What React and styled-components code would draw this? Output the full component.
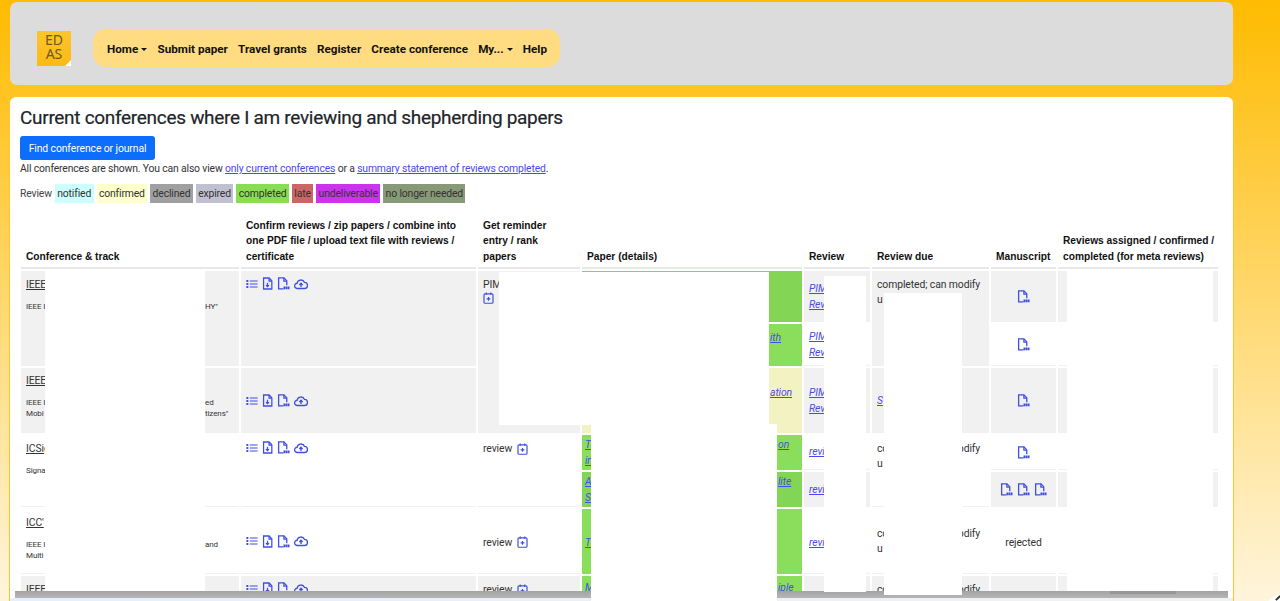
import React from "react";
import styled, { createGlobalStyle } from "styled-components";

const Global = createGlobalStyle`
  html, body {
    margin: 0;
    height: 601px;
    overflow: hidden;
  }
  body {
    background: linear-gradient(180deg, #ffbb00 0%, #fff5dc 100%);
    font-family: Roboto, "Noto Sans", sans-serif;
    color: #212529;
  }
`;

const Page = styled.div`
  position: relative;
  width: 1280px;
  height: 601px;
  overflow: hidden;
  padding: 2px 46px 0 9px;
  box-sizing: border-box;
`;
const Header = styled.header`
  height: 83px;
  margin: 0 1px;
  box-sizing: border-box;
  background: #dcdcdc;
  border-radius: 7px;
  display: flex;
  align-items: center;
  padding: 9px 0 0 27px;
  gap: 22px;
`;
const Logo = styled.div`
  position: relative;
  width: 34px;
  height: 35px;
  background: linear-gradient(180deg, #fcc52e, #fdb913);
  color: #6b5a22;
  font: 14px/14px "Noto Sans", sans-serif;
  text-align: center;
  padding-top: 2px;
  box-sizing: border-box;
`;
const LogoCorner = styled.span`
  position: absolute;
  right: 0;
  bottom: 0;
  width: 0;
  height: 0;
  border-style: solid;
  border-width: 0 0 6px 6px;
  border-color: transparent transparent #fff transparent;
`;
const Nav = styled.nav`
  width: 467px;
  height: 38px;
  box-sizing: border-box;
  background: #ffdc81;
  border-radius: 13px;
  display: flex;
  align-items: center;
  padding: 2px 0 0 14px;
  gap: 10.2px;
`;
const NavItem = styled.a`
  font-size: 11.7px;
  font-weight: 700;
  color: #111;
  white-space: nowrap;
  display: inline-flex;
  align-items: center;
`;
const Caret = styled.span`
  display: inline-block;
  margin-left: 3px;
  border-top: 3px solid #111;
  border-left: 3px solid transparent;
  border-right: 3px solid transparent;
`;
const Card = styled.main`
  margin-top: 11px;
  height: 520px;
  background: #fff;
  border: 1px solid #ffc42e;
  border-bottom: 0;
  border-radius: 7px 7px 0 0;
  padding: 9px 10px 0;
  box-sizing: border-box;
`;
const Title = styled.h1`
  margin: 0;
  font-size: 19px;
  letter-spacing: -0.3px;
  line-height: 24px;
  font-weight: 400;
  -webkit-text-stroke: 0.2px #212529;
  color: #212529;
  white-space: nowrap;
`;
const FindButton = styled.button`
  display: block;
  margin-top: 6px;
  width: 135px;
  height: 24px;
  padding: 0;
  border: 0;
  border-radius: 3px;
  background: #0d6efd;
  color: #fff;
  font: 10.4px Roboto, sans-serif;
  letter-spacing: -0.1px;
`;
const Note = styled.p`
  margin: 1px 0 0;
  font-size: 10.4px;
  letter-spacing: -0.16px;
  line-height: 15px;
  color: #333;
`;
const NoteLink = styled.a`
  color: #4a4ae8;
  text-decoration: underline;
`;
const Legend = styled.div`
  display: flex;
  align-items: center;
  gap: 3px;
  margin-top: 8px;
  height: 19px;
  font-size: 10.4px;
  letter-spacing: -0.15px;
  color: #444;
`;
const LegendTag = styled.span`
  background: ${(p) => p.$bg};
  padding: 0 2.4px;
  height: 19px;
  line-height: 19px;
  color: #333;
`;
const TableWrap = styled.div`
  margin-top: 11px;
  margin-left: -1px;
  height: 378px;
  overflow: hidden;
`;
const Table = styled.table`
  border-collapse: separate;
  border-spacing: 2px;
  table-layout: fixed;
  width: 1201px;
  font-size: 10.4px;
  letter-spacing: -0.1px;
  color: #333;
`;
const Th = styled.th`
  width: ${(p) => p.$w}px;
  height: 53px;
  vertical-align: bottom;
  text-align: left;
  font: 700 10.2px/15.3px "Liberation Sans", sans-serif;
  letter-spacing: 0;
  color: #111;
  padding: 0 0 3px 5px;
  border-bottom: 2px solid #e8e8e8;
  box-sizing: border-box;
`;
const Tr = styled.tr`
  height: ${(p) => p.$h}px;
`;
const Td = styled.td`
  background: ${(p) => p.$bg || "transparent"};
  vertical-align: ${(p) => p.$va || "top"};
  text-align: ${(p) => (p.$center ? "center" : "left")};
  padding: ${(p) => p.$pad || "6px 5px 0"};
  border-bottom: ${(p) => (p.$bg ? "0" : "1px solid #f0f0f0")};
  line-height: 15.3px;
  box-sizing: border-box;
  overflow: hidden;
`;
const ConfName = styled.a`
  display: block;
  text-decoration: underline;
  color: #333;
`;
const ConfTrack = styled.div`
  margin-top: 9px;
  font-size: 8px;
  line-height: 11px;
  color: #333;
`;
const TrackLine = styled.div`
  display: flex;
`;
const TrackStart = styled.span`
  width: 179px;
  flex: none;
`;
const IconRow = styled.div`
  display: flex;
  gap: 4px;
  align-items: center;
  justify-content: ${(p) => (p.$center ? "center" : "flex-start")};
  color: #3f4fe0;
`;
const ReviewCell = styled.span`
  display: inline-flex;
  align-items: center;
  gap: 5px;
`;
const PaperLink = styled.a`
  color: #4a4ae8;
  font-style: italic;
  text-decoration: underline;
  display: block;
`;
const PaperLine = styled.div`
  display: flex;
  height: 15.3px;
`;
const PaperStart = styled.span`
  width: ${(p) => p.$w || 185}px;
  flex: none;
`;
const Redaction = styled.div`
  position: absolute;
  left: ${(p) => p.$x}px;
  top: ${(p) => p.$y}px;
  width: ${(p) => p.$w}px;
  height: ${(p) => p.$h}px;
  background: #fff;
  z-index: ${(p) => p.$z || 1};
`;
const BottomStrip = styled.div`
  position: absolute;
  left: 10px;
  top: 598px;
  width: 1223px;
  height: 3px;
  background: linear-gradient(90deg, #e6effb, #f1f1f1);
`;
const Scrollbar = styled.div`
  position: absolute;
  left: 15px;
  top: 591px;
  width: 1213px;
  height: 7px;
  background: linear-gradient(180deg, #a3a3a3, #b6b6b6);
`;
const ScrollThumb = styled.div`
  position: absolute;
  left: 1095px;
  top: 0;
  width: 66px;
  height: 3px;
  background: #979797;
`;
const FloatButton = styled.div`
  position: absolute;
  left: 1265px;
  top: 594px;
  width: 36px;
  height: 36px;
  border-radius: 50%;
  background: #fff;
`;
const FloatMark = styled.span`
  position: absolute;
  left: 10px;
  top: 3px;
  width: 6px;
  height: 2px;
  background: #333;
  transform: rotate(-45deg);
`;

const ListIcon = () => (
  <svg width="12" height="12" viewBox="0 0 16 16" fill="currentColor">
    <path d="M5 3.2h10.5v1.4H5zM5 7.3h10.5v1.4H5zM5 11.4h10.5v1.4H5z" />
    <path d="M.5 2.6h2.6v2.6H.5zM.5 6.7h2.6v2.6H.5zM.5 10.8h2.6v2.6H.5z" />
  </svg>
);
const FileIcon = () => (
  <svg width="11" height="13" viewBox="0 0 14 16" fill="none" stroke="currentColor" strokeWidth="1.6">
    <path d="M2 1h7l3.5 3.5V15H2z" />
    <path d="M9 1v4h3.5" />
    <path d="M7 7v5M5 10l2 2 2-2" />
  </svg>
);
const PdfIcon = () => (
  <svg width="13" height="13" viewBox="0 0 16 16" fill="none" stroke="currentColor" strokeWidth="1.6">
    <path d="M8 14.5H2V1h6.5L12 4.5V10" />
    <path d="M8.5 1v4H12" />
    <path d="M8 13.5h7.5" strokeWidth="3.4" strokeDasharray="2.2 0.4" />
  </svg>
);
const CloudIcon = () => (
  <svg width="14" height="12" viewBox="0 0 18 16" fill="none" stroke="currentColor" strokeWidth="1.8">
    <path d="M5 14H4.2A3.5 3.5 0 0 1 3.8 7 5.2 5.2 0 0 1 13.7 5.9 4 4 0 0 1 13.6 14H5z" />
    <path d="M9 12V7M6.8 9.2 9 7l2.2 2.2" />
  </svg>
);
const CalendarIcon = () => (
  <svg width="11" height="12" viewBox="0 0 14 16" fill="none" stroke="currentColor" strokeWidth="1.6">
    <rect x="1" y="2.5" width="12" height="12.5" rx="1.5" />
    <path d="M4 .5v3M10 .5v3" />
    <path d="M7 6.7v5M4.5 9.2h5" />
  </svg>
);

const ConfirmIcons = () => (
  <IconRow>
    <ListIcon />
    <FileIcon />
    <PdfIcon />
    <CloudIcon />
  </IconRow>
);
const Pdf = ({ count = 1 }) => (
  <IconRow $center>
    {Array.from({ length: count }).map((_, i) => (
      <PdfIcon key={i} />
    ))}
  </IconRow>
);
const Review = () => (
  <ReviewCell>
    review
    <IconRow>
      <CalendarIcon />
    </IconRow>
  </ReviewCell>
);
const Track = ({ start, end }) => (
  <TrackLine>
    <TrackStart>{start}</TrackStart>
    <span>{end}</span>
  </TrackLine>
);
const Paper = ({ start, end, offset }) => (
  <PaperLine>
    <PaperStart $w={offset}>
      <PaperLink>{start}</PaperLink>
    </PaperStart>
    <PaperLink>{end}</PaperLink>
  </PaperLine>
);
const ReviewLinks = () => (
  <>
    <PaperLink>PIM</PaperLink>
    <PaperLink>Rev</PaperLink>
  </>
);
const Due = () => (
  <>
    completed; can modify
    <br />u
  </>
);

const GREY = "#f1f1f1";
const GREEN = "#8ade5c";
const GREEN_DK = "#83d556";
const YELLOW = "#f3f2c2";
const MID = "0 5px";
const LOW = "3px 5px 0";
const PAPER = "0 3px";

// white patches that hide parts of the table in the picture: x, y, w, h, above scrollbar
const patches = [
  [45, 271, 160, 320, 1],
  [499, 272, 270, 153, 1],
  [591, 424, 186, 177, 3],
  [824, 276, 42, 316, 1],
  [884, 293, 78, 302, 3],
  [1067, 271, 146, 320, 1],
];

export default function App() {
  return (
    <Page>
      <Global />
      <Header>
        <Logo>
          ED
          <br />
          AS
          <LogoCorner />
        </Logo>
        <Nav>
          <NavItem>
            Home
            <Caret />
          </NavItem>
          <NavItem>Submit paper</NavItem>
          <NavItem>Travel grants</NavItem>
          <NavItem>Register</NavItem>
          <NavItem>Create conference</NavItem>
          <NavItem>
            My...
            <Caret />
          </NavItem>
          <NavItem>Help</NavItem>
        </Nav>
      </Header>
      <Card>
        <Title>Current conferences where I am reviewing and shepherding papers</Title>
        <FindButton>Find conference or journal</FindButton>
        <Note>
          All conferences are shown. You can also view <NoteLink>only current conferences</NoteLink> or a{" "}
          <NoteLink>summary statement of reviews completed</NoteLink>.
        </Note>
        <Legend>
          Review
          <LegendTag $bg="#ccffff">notified</LegendTag>
          <LegendTag $bg="#ffffcc">confirmed</LegendTag>
          <LegendTag $bg="#a0a0a0">declined</LegendTag>
          <LegendTag $bg="#c0c0d0">expired</LegendTag>
          <LegendTag $bg="#88dd55">completed</LegendTag>
          <LegendTag $bg="#cc6666">late</LegendTag>
          <LegendTag $bg="#cc33ee">undeliverable</LegendTag>
          <LegendTag $bg="#889977">no longer needed</LegendTag>
        </Legend>
        <TableWrap>
          <Table>
            <thead>
              <tr>
                <Th $w={218}>Conference &amp; track</Th>
                <Th $w={235}>
                  Confirm reviews / zip papers / combine into
                  <br />
                  one PDF file / upload text file with reviews /
                  <br />
                  certificate
                </Th>
                <Th $w={102}>
                  Get reminder
                  <br />
                  entry / rank
                  <br />
                  papers
                </Th>
                <Th $w={220}>Paper (details)</Th>
                <Th $w={66}>Review</Th>
                <Th $w={117}>Review due</Th>
                <Th $w={65}>Manuscript</Th>
                <Th $w={160}>
                  Reviews assigned / confirmed /
                  <br />
                  completed (for meta reviews)
                </Th>
              </tr>
            </thead>
            <tbody>
              <Tr $h={51}>
                <Td $bg={GREY} rowSpan={2}>
                  <ConfName>IEEE</ConfName>
                  <ConfTrack>
                    <Track start="IEEE I" end={'HY"'} />
                  </ConfTrack>
                </Td>
                <Td $bg={GREY} rowSpan={2}>
                  <ConfirmIcons />
                </Td>
                <Td $bg={GREY} rowSpan={3}>
                  PIM
                  <IconRow>
                    <CalendarIcon />
                  </IconRow>
                </Td>
                <Td $bg={GREEN_DK} />
                <Td $bg={GREY} $va="middle" $pad={MID}>
                  <ReviewLinks />
                </Td>
                <Td $bg={GREY} rowSpan={2}>
                  <Due />
                </Td>
                <Td $bg={GREY} $va="middle" $center $pad={MID}>
                  <Pdf />
                </Td>
                <Td $bg={GREY} />
              </Tr>
              <Tr $h={42}>
                <Td $bg={GREEN} $va="middle" $pad={PAPER}>
                  <Paper end="ith" />
                  <Paper />
                </Td>
                <Td $va="middle" $pad={MID}>
                  <ReviewLinks />
                </Td>
                <Td $va="middle" $center $pad={MID}>
                  <Pdf />
                </Td>
                <Td />
              </Tr>
              <Tr $h={65}>
                <Td $bg={GREY} $pad="5px 5px 0">
                  <ConfName>IEEE</ConfName>
                  <ConfTrack>
                    <Track start="IEEE I" end="ed" />
                    <Track start="Mobi" end={'tizens"'} />
                  </ConfTrack>
                </Td>
                <Td $bg={GREY} $va="middle" $pad={MID}>
                  <ConfirmIcons />
                </Td>
                <Td $bg={YELLOW} $va="middle" $pad={PAPER}>
                  <Paper end="ation" />
                  <Paper />
                </Td>
                <Td $bg={GREY} $va="middle" $pad={MID}>
                  <ReviewLinks />
                </Td>
                <Td $bg={GREY} $va="middle" $pad={MID}>
                  <PaperLink>S</PaperLink>
                </Td>
                <Td $bg={GREY} $va="middle" $center $pad={MID}>
                  <Pdf />
                </Td>
                <Td $bg={GREY} />
              </Tr>
              <Tr $h={35}>
                <Td rowSpan={2}>
                  <ConfName>ICSig</ConfName>
                  <ConfTrack>Signa</ConfTrack>
                </Td>
                <Td rowSpan={2}>
                  <ConfirmIcons />
                </Td>
                <Td rowSpan={2}>
                  <Review />
                </Td>
                <Td $bg={GREEN} $va="middle" $pad={PAPER}>
                  <Paper start="Th" end="on" offset={193} />
                  <Paper start="in" offset={193} />
                </Td>
                <Td $va="middle" $pad={MID}>
                  <PaperLink>revi</PaperLink>
                </Td>
                <Td rowSpan={2}>
                  <Due />
                </Td>
                <Td $va="middle" $center $pad={MID}>
                  <Pdf />
                </Td>
                <Td />
              </Tr>
              <Tr $h={35}>
                <Td $bg={GREEN_DK} $va="middle" $pad={PAPER}>
                  <Paper start="A" end="lite" offset={193} />
                  <Paper start="Sy" offset={193} />
                </Td>
                <Td $bg={GREY} $va="middle" $pad={MID}>
                  <PaperLink>revi</PaperLink>
                </Td>
                <Td $bg={GREY} $va="middle" $center $pad={MID}>
                  <Pdf count={3} />
                </Td>
                <Td $bg={GREY} />
              </Tr>
              <Tr $h={65}>
                <Td>
                  <ConfName>ICC'</ConfName>
                  <ConfTrack>
                    <Track start="IEEE I" end="and" />
                    <Track start="Multi" />
                  </ConfTrack>
                </Td>
                <Td $va="middle" $pad={MID}>
                  <ConfirmIcons />
                </Td>
                <Td $va="middle" $pad={LOW}>
                  <Review />
                </Td>
                <Td $bg={GREEN} $va="middle" $pad="3px 3px 0">
                  <PaperLink>Th</PaperLink>
                </Td>
                <Td $va="middle" $pad={LOW}>
                  <PaperLink>revi</PaperLink>
                </Td>
                <Td $va="middle" $pad={MID}>
                  <Due />
                </Td>
                <Td $va="middle" $center $pad={LOW}>
                  rejected
                </Td>
                <Td />
              </Tr>
              <Tr $h={40}>
                <Td $bg={GREY}>
                  <ConfName>IEEE</ConfName>
                </Td>
                <Td $bg={GREY}>
                  <ConfirmIcons />
                </Td>
                <Td $bg={GREY}>
                  <Review />
                </Td>
                <Td $bg={GREEN} $pad="4px 3px 0">
                  <Paper start="M" end="iple" offset={193} />
                </Td>
                <Td $bg={GREY} />
                <Td $bg={GREY}>completed; can modify</Td>
                <Td $bg={GREY} $center $pad="12px 5px 0">
                  rejected
                </Td>
                <Td $bg={GREY} />
              </Tr>
            </tbody>
          </Table>
        </TableWrap>
      </Card>
      {patches.map(([x, y, w, h, z]) => (
        <Redaction key={x} $x={x} $y={y} $w={w} $h={h} $z={z} />
      ))}
      <BottomStrip />
      <Scrollbar>
        <ScrollThumb />
      </Scrollbar>
      <FloatButton>
        <FloatMark />
      </FloatButton>
    </Page>
  );
}
